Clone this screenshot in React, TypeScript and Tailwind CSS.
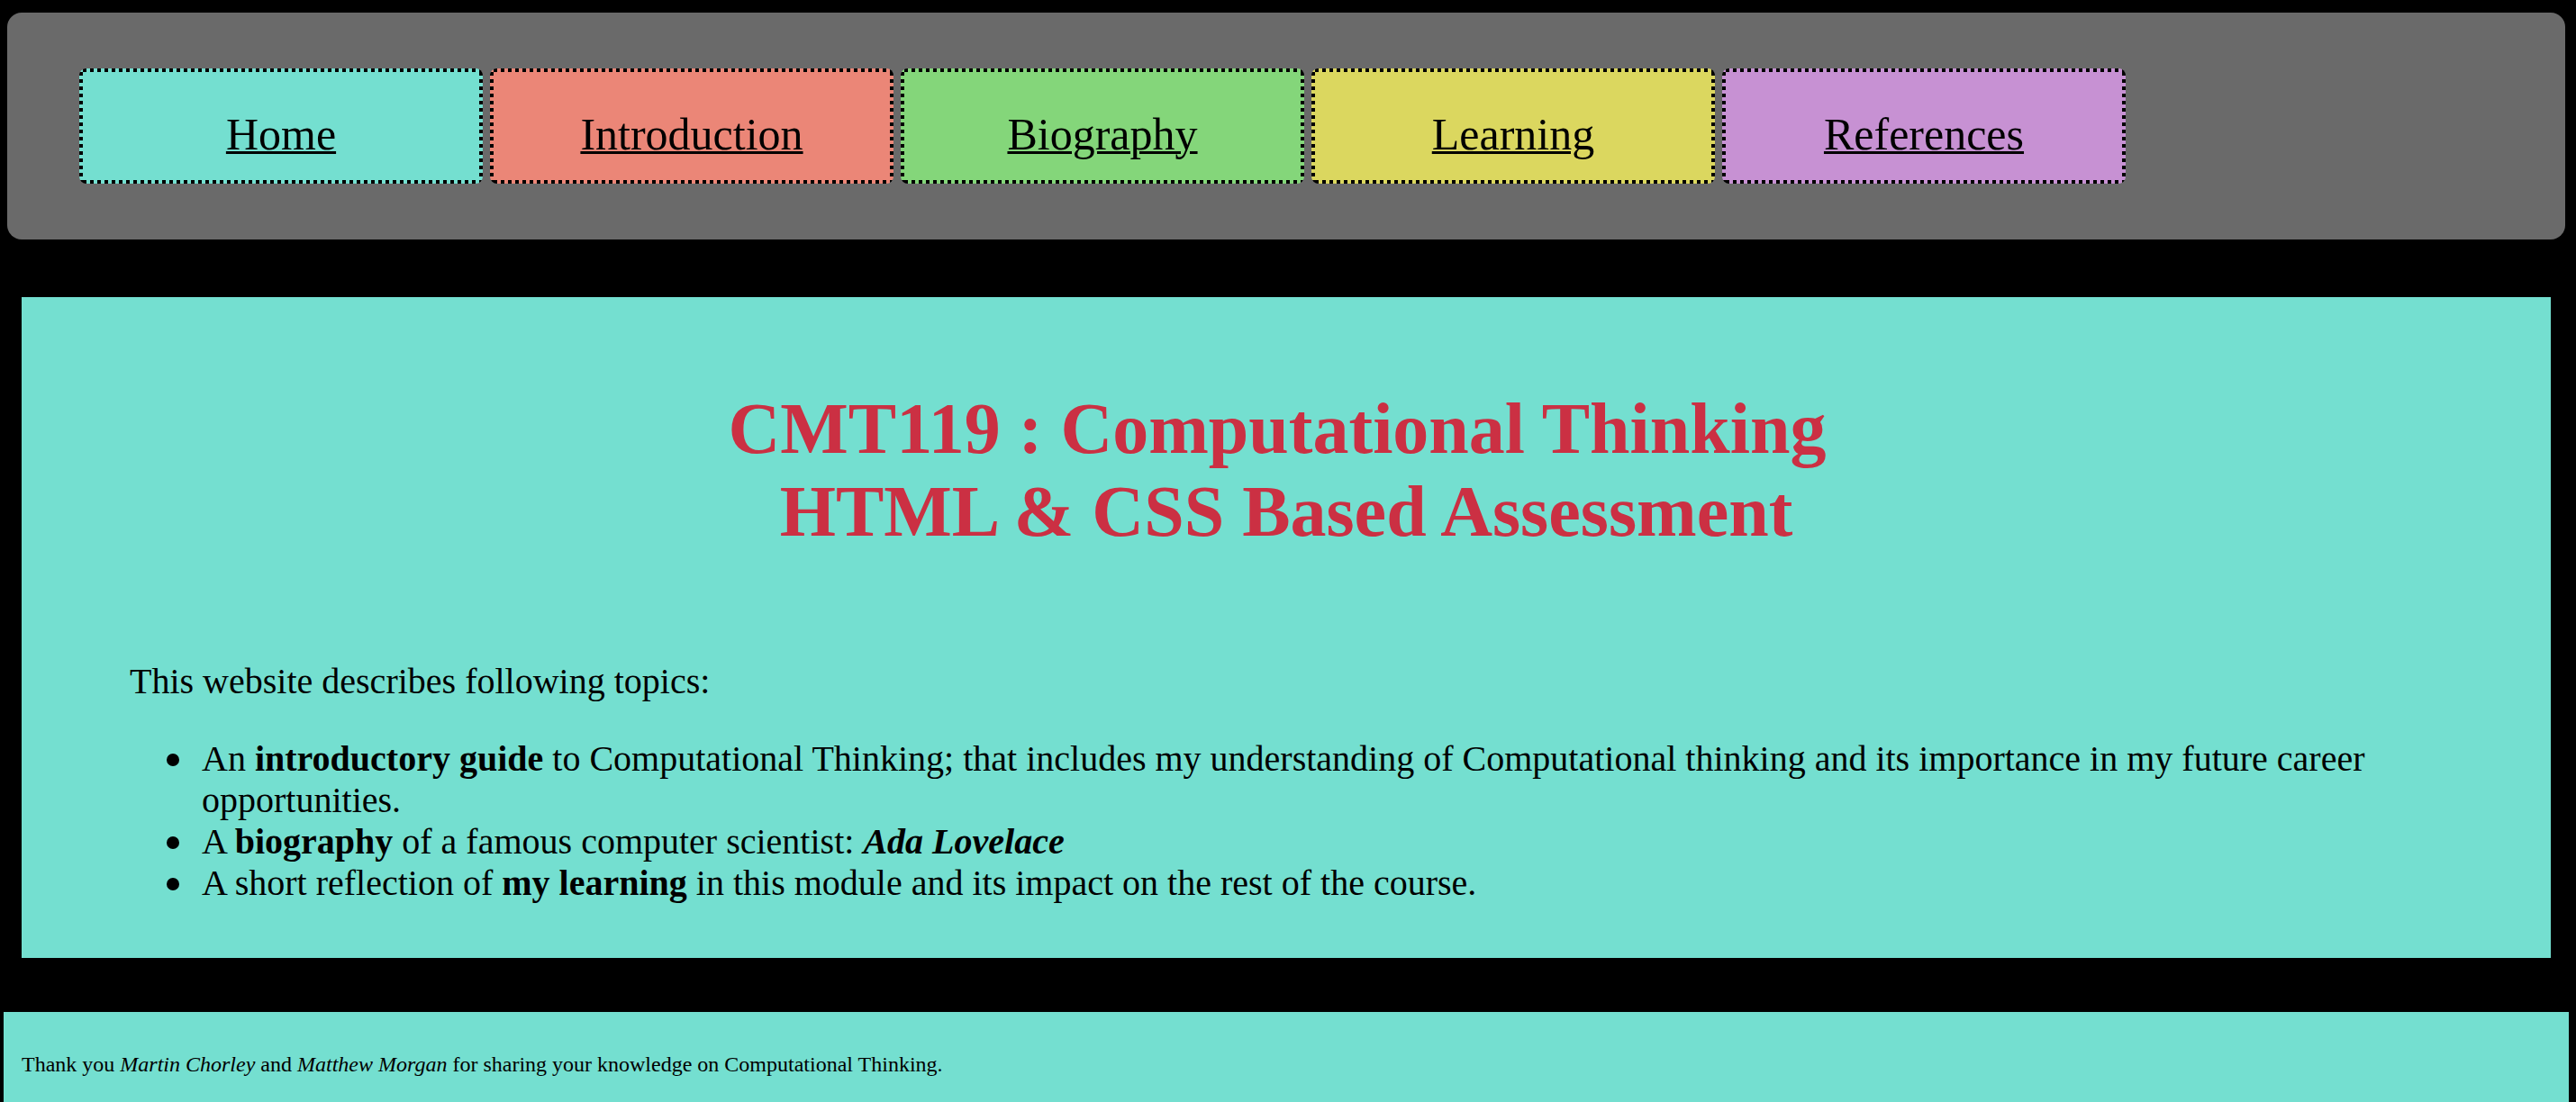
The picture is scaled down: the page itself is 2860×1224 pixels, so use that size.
import type { ReactNode } from "react";

const items = [
  { label: "Home", color: "bg-[#74dfd0]" },
  { label: "Introduction", color: "bg-[#eb8677]" },
  { label: "Biography", color: "bg-[#84d67a]" },
  { label: "Learning", color: "bg-[#dbd75f]" },
  { label: "References", color: "bg-[#c791d3]" },
];

// Square dots along the four edges of a box.
const squareDots =
  "bg-no-repeat [background-image:repeating-linear-gradient(90deg,transparent_0_4px,#000_4px_8px),repeating-linear-gradient(90deg,transparent_0_4px,#000_4px_8px),repeating-linear-gradient(180deg,transparent_0_4px,#000_4px_8px),repeating-linear-gradient(180deg,transparent_0_4px,#000_4px_8px)] [background-position:top,bottom,left,right] [background-size:100%_4px,100%_4px,4px_100%,4px_100%]";

function Topic({ children }: { children: ReactNode }) {
  return (
    <li className="flex gap-6">
      <span className="mt-4 size-4 shrink-0 rounded-full border border-transparent bg-black bg-clip-padding" />
      <div>{children}</div>
    </li>
  );
}

export default function App() {
  return (
    <div className="min-h-screen bg-black font-['Liberation_Serif',serif] text-black">
      <header className="mr-3 ml-2 pt-3.5">
        <nav className="rounded-2xl bg-[#6a6a6a] py-[62px] pl-20">
          <ul className="flex gap-2">
            {items.map((item) => (
              <li key={item.label} className={`w-[448px] rounded-lg p-1 ${squareDots} ${item.color}`}>
                <a
                  href="#"
                  className="flex h-[120px] items-center justify-center pt-[18px] text-[50px] leading-[56px] underline decoration-[3px] underline-offset-2"
                >
                  {item.label}
                </a>
              </li>
            ))}
          </ul>
        </nav>
      </header>
      <main className="mt-16 mr-7 ml-6 bg-[#74dfd0] px-[120px] pt-[100px] pb-[60px] text-[40px] leading-[46px]">
        <h1 className="text-center text-[80px] leading-[92px] font-bold text-[#cb3043]">
          CMT119 : Computational Thinking&nbsp;
          <br />
          HTML &amp; CSS Based Assessment
        </h1>
        <p className="mt-[120px]">This website describes following topics:</p>
        <ul className="mt-10 pl-10">
          <Topic>
            An <b>introductory guide</b> to Computational Thinking; that includes my understanding of
            Computational thinking and its importance in my future career opportunities.
          </Topic>
          <Topic>
            A <b>biography</b> of a famous computer scientist: <b><i>Ada Lovelace</i></b>
          </Topic>
          <Topic>
            A short reflection of <b>my learning</b> in this module and its impact on the rest of the course.
          </Topic>
        </ul>
      </main>
      <footer className="mt-[60px] mr-2 ml-1 bg-[#74dfd0] px-5 pt-11 pb-7 text-2xl leading-7">
        Thank you <i>Martin Chorley</i> and <i>Matthew Morgan</i> for sharing your knowledge on Computational
        Thinking.
      </footer>
    </div>
  );
}
